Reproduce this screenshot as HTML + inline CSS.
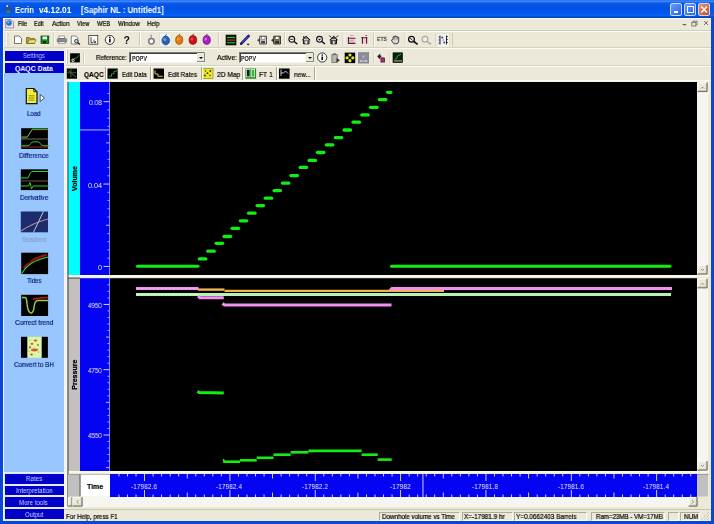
<!DOCTYPE html>
<html><head><meta charset="utf-8">
<style>
*{margin:0;padding:0;box-sizing:border-box}
html,body{width:714px;height:524px;overflow:hidden;background:#ECE9D8;font-family:"Liberation Sans", sans-serif;position:relative}
.a{position:absolute}
.t{position:absolute;white-space:nowrap;font-size:8px;line-height:10px;color:#000;will-change:transform;-webkit-text-stroke:0.2px currentColor}
.btn{position:absolute;left:5px;width:59px;background:#0000c8}
.lbl{position:absolute;width:60px;left:4px;text-align:center;font-size:7.5px;color:#1a3aa8;line-height:9px}
</style></head><body>

<div class="a" style="left:0;top:0;width:714px;height:18px;background:linear-gradient(#2a6ff0 0,#3a86ff 1.5px,#0a5ae8 3px,#0052e4 8px,#0058ee 13px,#0a62f8 16px,#0046c8 17px,#0040c0 18px)"></div>
<svg class="a" style="left:4px;top:4px" width="10" height="11"><rect x="1.5" y="1.5" width="6" height="8" fill="#2a4aa8"/><rect x="2.5" y="6.5" width="4" height="2.5" fill="#2a8a50"/><rect x="2.5" y="1" width="1.5" height="2" fill="#c0e0ff"/></svg>
<div class="a" style="left:670px;top:3.4px;width:12.2px;height:12.6px;border:1px solid #c8d8ff;border-radius:2px;background:linear-gradient(135deg,#6a9cf8,#2a62e8)"></div>
<div class="a" style="left:684px;top:3.4px;width:12.2px;height:12.6px;border:1px solid #c8d8ff;border-radius:2px;background:linear-gradient(135deg,#6a9cf8,#2a62e8)"></div>
<div class="a" style="left:698px;top:3.4px;width:12.2px;height:12.6px;border:1px solid #c8d8ff;border-radius:2px;background:linear-gradient(135deg,#f0906a,#d04a20)"></div>
<div class="a" style="left:673.5px;top:11px;width:4px;height:1.6px;background:#fff"></div>
<div class="a" style="left:686.8px;top:6px;width:7px;height:7px;border:1px solid #fff;border-top-width:1.6px"></div>
<svg class="a" style="left:698px;top:3px" width="13" height="13"><path d="M3.3 3.6 L9 9.6 M9 3.6 L3.3 9.6" stroke="#fff" stroke-width="1.5"/></svg>
<div class="a" style="left:0;top:17px;width:2.6px;height:507px;background:#0848d8"></div>
<div class="a" style="left:711px;top:17px;width:3px;height:507px;background:#0848d8"></div>
<div class="a" style="left:0;top:521px;width:714px;height:3px;background:#0848d8"></div>
<div class="a" style="left:3px;top:18px;width:708px;height:12px;background:#ECE9D8;border-top:1px solid #f8f8ff"></div>
<svg class="a" style="left:4px;top:18px" width="11" height="11"><path d="M1.5 1.5 h5.5 l2.5 2.5 v6 h-8 z" fill="#e8e0f0" stroke="#8070a0" stroke-width="0.7"/><circle cx="5" cy="5" r="2.8" fill="#1a78b8"/><circle cx="4.3" cy="4.3" r="1" fill="#80c8f0"/></svg>
<svg class="a" style="left:680px;top:18px" width="30" height="11"><rect x="2.6" y="6" width="3.6" height="1.2" fill="#666"/><rect x="13" y="3.2" width="4" height="3.5" fill="none" stroke="#777" stroke-width="0.9"/><rect x="11.8" y="4.5" width="4" height="3.5" fill="#ece9d8" stroke="#777" stroke-width="0.9"/><path d="M24 3 L28 7 M28 3 L24 7" stroke="#777" stroke-width="1"/></svg>
<div class="a" style="left:3px;top:30px;width:708px;height:1px;background:#d0cdbc"></div>
<div class="a" style="left:3px;top:31px;width:708px;height:1px;background:#fbfaf4"></div>
<div class="a" style="left:3px;top:47px;width:708px;height:1px;background:#d6d2c2"></div>
<div class="a" style="left:64px;top:48px;width:647px;height:1px;background:#fbfaf4"></div>
<div class="a" style="left:64px;top:65px;width:647px;height:1px;background:#d6d2c2"></div>
<div class="a" style="left:64px;top:66px;width:647px;height:1px;background:#fbfaf4"></div>
<div class="a" style="left:64px;top:80px;width:647px;height:1px;background:#fbfaf4"></div>
<div class="a" style="left:3px;top:48px;width:61px;height:461px;background:#ECE9D8"></div>
<div class="a" style="left:4px;top:73px;width:60px;height:399px;background:#97c7fe"></div>
<div class="a" style="left:3.5px;top:472px;width:61px;height:49px;background:#e6eaf2"></div>
<div class="a" style="left:3.5px;top:50px;width:61px;height:23px;background:#eef0f4"></div>
<div class="a" style="left:2.5px;top:18px;width:1.2px;height:503px;background:#f4f6ff"></div>
<div class="btn" style="top:51px;height:10px"></div>
<div class="btn" style="top:63px;height:10px"></div>
<div class="btn" style="top:474px;height:9.6px"></div>
<div class="btn" style="top:485.5px;height:9.6px"></div>
<div class="btn" style="top:497.3px;height:9.6px"></div>
<div class="btn" style="top:509.4px;height:9.6px"></div>
<svg class="a" style="left:0;top:0;will-change:transform" width="714" height="524" font-family="Liberation Sans, sans-serif"><defs><linearGradient id="sepg" x1="0" y1="0" x2="0" y2="1"><stop offset="0" stop-color="#fcfcf2"/><stop offset="0.5" stop-color="#f6f4e6"/><stop offset="1" stop-color="#e4e0cc"/></linearGradient></defs><rect x="64" y="81" width="647" height="428" fill="#ECE9D8"/><rect x="67.5" y="81.5" width="641" height="15" fill="#f6f4ec"/><rect x="68" y="82" width="12" height="193" fill="#00ffff"/><rect x="80" y="82" width="30" height="193" fill="#0404f2"/><rect x="110" y="82" width="587" height="193" fill="#000"/><rect x="67.5" y="275" width="641" height="3.2" fill="url(#sepg)"/><rect x="68" y="278.2" width="12" height="192.8" fill="#c4c0c0"/><rect x="80" y="278.2" width="30" height="192.8" fill="#0404f2"/><rect x="110" y="278.2" width="587" height="192.8" fill="#000"/><rect x="67.5" y="471" width="641" height="3" fill="url(#sepg)"/><rect x="64" y="81" width="3.6" height="428" fill="#f7f4ec"/><rect x="67.4" y="82" width="1.1" height="424.5" fill="#3a4a48"/><rect x="68" y="277.6" width="12" height="0.9" fill="#303030"/><rect x="67.5" y="474" width="641" height="1" fill="#808070"/><rect x="68" y="474.5" width="12" height="22" fill="#c0c0c0"/><rect x="80" y="474.5" width="30" height="22" fill="#fff"/><rect x="79.6" y="474.5" width="0.9" height="22" fill="#404040"/><rect x="110" y="474" width="587" height="23" fill="#0404f2"/><rect x="697" y="474.5" width="11" height="22" fill="#c0c0c0"/><rect x="697" y="82" width="11" height="193" fill="#f6f5f0"/><rect x="697.5" y="82.5" width="10" height="9.5" fill="#ECE9D8"/><path d="M697.9 92.0 V82.9 H707.5" stroke="#fff" stroke-width="0.8" fill="none"/><path d="M697.5 91.6 H707.1 V82.5" stroke="#404040" stroke-width="0.8" fill="none"/><path d="M698.3 90.9 H706.4 V83.3" stroke="#9a9888" stroke-width="0.7" fill="none"/><rect x="697.5" y="265" width="10" height="9.5" fill="#ECE9D8"/><path d="M697.9 274.5 V265.4 H707.5" stroke="#fff" stroke-width="0.8" fill="none"/><path d="M697.5 274.1 H707.1 V265" stroke="#404040" stroke-width="0.8" fill="none"/><path d="M698.3 273.4 H706.4 V265.8" stroke="#9a9888" stroke-width="0.7" fill="none"/><path d="M701 88.5 l1.5 -1.5 l1.5 1.5" stroke="#777" fill="none" stroke-width="0.8"/><path d="M701 269 l1.5 1.5 l1.5 -1.5" stroke="#777" fill="none" stroke-width="0.8"/><rect x="697" y="278.2" width="11" height="192.8" fill="#f6f5f0"/><rect x="697.5" y="278.7" width="10" height="9.5" fill="#ECE9D8"/><path d="M697.9 288.2 V279.09999999999997 H707.5" stroke="#fff" stroke-width="0.8" fill="none"/><path d="M697.5 287.8 H707.1 V278.7" stroke="#404040" stroke-width="0.8" fill="none"/><path d="M698.3 287.09999999999997 H706.4 V279.5" stroke="#9a9888" stroke-width="0.7" fill="none"/><rect x="697.5" y="461" width="10" height="9.5" fill="#ECE9D8"/><path d="M697.9 470.5 V461.4 H707.5" stroke="#fff" stroke-width="0.8" fill="none"/><path d="M697.5 470.1 H707.1 V461" stroke="#404040" stroke-width="0.8" fill="none"/><path d="M698.3 469.4 H706.4 V461.8" stroke="#9a9888" stroke-width="0.7" fill="none"/><path d="M701 284.7 l1.5 -1.5 l1.5 1.5" stroke="#777" fill="none" stroke-width="0.8"/><path d="M701 465 l1.5 1.5 l1.5 -1.5" stroke="#777" fill="none" stroke-width="0.8"/><rect x="68" y="497" width="629" height="10" fill="#f6f5f0"/><rect x="68" y="497" width="4.5" height="9.5" fill="#ECE9D8"/><path d="M68.4 506.5 V497.4 H72.5" stroke="#fff" stroke-width="0.8" fill="none"/><path d="M68 506.1 H72.1 V497" stroke="#404040" stroke-width="0.8" fill="none"/><path d="M68.8 505.4 H71.4 V497.8" stroke="#9a9888" stroke-width="0.7" fill="none"/><rect x="72.5" y="497" width="10" height="9.5" fill="#ECE9D8"/><path d="M72.9 506.5 V497.4 H82.5" stroke="#fff" stroke-width="0.8" fill="none"/><path d="M72.5 506.1 H82.1 V497" stroke="#404040" stroke-width="0.8" fill="none"/><path d="M73.3 505.4 H81.4 V497.8" stroke="#9a9888" stroke-width="0.7" fill="none"/><rect x="688.5" y="497" width="9" height="9.5" fill="#ECE9D8"/><path d="M688.9 506.5 V497.4 H697.5" stroke="#fff" stroke-width="0.8" fill="none"/><path d="M688.5 506.1 H697.1 V497" stroke="#404040" stroke-width="0.8" fill="none"/><path d="M689.3 505.4 H696.4 V497.8" stroke="#9a9888" stroke-width="0.7" fill="none"/><path d="M78.5 500 l-1.5 1.8 l1.5 1.8" stroke="#777" fill="none" stroke-width="0.8"/><path d="M692 500 l1.5 1.8 l-1.5 1.8" stroke="#777" fill="none" stroke-width="0.8"/><rect x="103.5" y="265.95" width="6.5" height="0.9" fill="#e8e8ff"/><rect x="107.5" y="257.71" width="2.5" height="0.9" fill="#b0b0ff"/><rect x="107.5" y="249.48" width="2.5" height="0.9" fill="#b0b0ff"/><rect x="107.5" y="241.25" width="2.5" height="0.9" fill="#b0b0ff"/><rect x="107.5" y="233.01" width="2.5" height="0.9" fill="#b0b0ff"/><rect x="106" y="224.77" width="4" height="0.9" fill="#c8c8ff"/><rect x="107.5" y="216.54" width="2.5" height="0.9" fill="#b0b0ff"/><rect x="107.5" y="208.31" width="2.5" height="0.9" fill="#b0b0ff"/><rect x="107.5" y="200.07" width="2.5" height="0.9" fill="#b0b0ff"/><rect x="107.5" y="191.83" width="2.5" height="0.9" fill="#b0b0ff"/><rect x="103.5" y="183.60" width="6.5" height="0.9" fill="#e8e8ff"/><rect x="107.5" y="175.37" width="2.5" height="0.9" fill="#b0b0ff"/><rect x="107.5" y="167.13" width="2.5" height="0.9" fill="#b0b0ff"/><rect x="107.5" y="158.89" width="2.5" height="0.9" fill="#b0b0ff"/><rect x="107.5" y="150.66" width="2.5" height="0.9" fill="#b0b0ff"/><rect x="106" y="142.43" width="4" height="0.9" fill="#c8c8ff"/><rect x="107.5" y="134.19" width="2.5" height="0.9" fill="#b0b0ff"/><rect x="107.5" y="125.95" width="2.5" height="0.9" fill="#b0b0ff"/><rect x="107.5" y="117.72" width="2.5" height="0.9" fill="#b0b0ff"/><rect x="107.5" y="109.48" width="2.5" height="0.9" fill="#b0b0ff"/><rect x="103.5" y="101.25" width="6.5" height="0.9" fill="#e8e8ff"/><rect x="107.5" y="93.01" width="2.5" height="0.9" fill="#b0b0ff"/><rect x="109" y="82" width="0.9" height="193" fill="#8a8aff"/><rect x="80" y="129.5" width="29" height="0.9" fill="#c8c8ff"/><rect x="107.5" y="284.36" width="2.5" height="0.9" fill="#b0b0ff"/><rect x="107.5" y="290.89" width="2.5" height="0.9" fill="#b0b0ff"/><rect x="107.5" y="297.42" width="2.5" height="0.9" fill="#b0b0ff"/><rect x="103.5" y="303.95" width="6.5" height="0.9" fill="#e8e8ff"/><rect x="107.5" y="310.48" width="2.5" height="0.9" fill="#b0b0ff"/><rect x="107.5" y="317.01" width="2.5" height="0.9" fill="#b0b0ff"/><rect x="107.5" y="323.54" width="2.5" height="0.9" fill="#b0b0ff"/><rect x="107.5" y="330.07" width="2.5" height="0.9" fill="#b0b0ff"/><rect x="106" y="336.60" width="4" height="0.9" fill="#c8c8ff"/><rect x="107.5" y="343.13" width="2.5" height="0.9" fill="#b0b0ff"/><rect x="107.5" y="349.66" width="2.5" height="0.9" fill="#b0b0ff"/><rect x="107.5" y="356.19" width="2.5" height="0.9" fill="#b0b0ff"/><rect x="107.5" y="362.72" width="2.5" height="0.9" fill="#b0b0ff"/><rect x="103.5" y="369.25" width="6.5" height="0.9" fill="#e8e8ff"/><rect x="107.5" y="375.78" width="2.5" height="0.9" fill="#b0b0ff"/><rect x="107.5" y="382.31" width="2.5" height="0.9" fill="#b0b0ff"/><rect x="107.5" y="388.84" width="2.5" height="0.9" fill="#b0b0ff"/><rect x="107.5" y="395.37" width="2.5" height="0.9" fill="#b0b0ff"/><rect x="106" y="401.90" width="4" height="0.9" fill="#c8c8ff"/><rect x="107.5" y="408.43" width="2.5" height="0.9" fill="#b0b0ff"/><rect x="107.5" y="414.96" width="2.5" height="0.9" fill="#b0b0ff"/><rect x="107.5" y="421.49" width="2.5" height="0.9" fill="#b0b0ff"/><rect x="107.5" y="428.02" width="2.5" height="0.9" fill="#b0b0ff"/><rect x="103.5" y="434.55" width="6.5" height="0.9" fill="#e8e8ff"/><rect x="107.5" y="441.08" width="2.5" height="0.9" fill="#b0b0ff"/><rect x="107.5" y="447.61" width="2.5" height="0.9" fill="#b0b0ff"/><rect x="107.5" y="454.14" width="2.5" height="0.9" fill="#b0b0ff"/><rect x="107.5" y="460.67" width="2.5" height="0.9" fill="#b0b0ff"/><rect x="106" y="467.20" width="4" height="0.9" fill="#c8c8ff"/><rect x="109" y="278.2" width="0.9" height="192.8" fill="#8a8aff"/><text x="77.3" y="178.5" font-size="7" fill="#000" text-anchor="middle" font-weight="bold" stroke="#000" stroke-width="0.25" transform="rotate(-90 77.3 178.5)">Volume</text><text x="77.3" y="374.7" font-size="7" fill="#000" text-anchor="middle" font-weight="bold" stroke="#000" stroke-width="0.25" transform="rotate(-90 77.3 374.7)">Pressure</text><rect x="118.50" y="474" width="0.9" height="2.5" fill="#e0e0ff"/><rect x="118.50" y="494.5" width="0.9" height="2.5" fill="#e0e0ff"/><rect x="127.03" y="474" width="0.9" height="2.5" fill="#e0e0ff"/><rect x="127.03" y="494.5" width="0.9" height="2.5" fill="#e0e0ff"/><rect x="135.56" y="474" width="0.9" height="2.5" fill="#e0e0ff"/><rect x="135.56" y="494.5" width="0.9" height="2.5" fill="#e0e0ff"/><rect x="144.10" y="474" width="0.9" height="7" fill="#e0e0ff"/><rect x="144.10" y="490" width="0.9" height="7" fill="#e0e0ff"/><rect x="152.63" y="474" width="0.9" height="2.5" fill="#e0e0ff"/><rect x="152.63" y="494.5" width="0.9" height="2.5" fill="#e0e0ff"/><rect x="161.17" y="474" width="0.9" height="2.5" fill="#e0e0ff"/><rect x="161.17" y="494.5" width="0.9" height="2.5" fill="#e0e0ff"/><rect x="169.70" y="474" width="0.9" height="2.5" fill="#e0e0ff"/><rect x="169.70" y="494.5" width="0.9" height="2.5" fill="#e0e0ff"/><rect x="178.24" y="474" width="0.9" height="2.5" fill="#e0e0ff"/><rect x="178.24" y="494.5" width="0.9" height="2.5" fill="#e0e0ff"/><rect x="186.78" y="474" width="0.9" height="4.5" fill="#e0e0ff"/><rect x="186.78" y="492.5" width="0.9" height="4.5" fill="#e0e0ff"/><rect x="195.31" y="474" width="0.9" height="2.5" fill="#e0e0ff"/><rect x="195.31" y="494.5" width="0.9" height="2.5" fill="#e0e0ff"/><rect x="203.84" y="474" width="0.9" height="2.5" fill="#e0e0ff"/><rect x="203.84" y="494.5" width="0.9" height="2.5" fill="#e0e0ff"/><rect x="212.38" y="474" width="0.9" height="2.5" fill="#e0e0ff"/><rect x="212.38" y="494.5" width="0.9" height="2.5" fill="#e0e0ff"/><rect x="220.91" y="474" width="0.9" height="2.5" fill="#e0e0ff"/><rect x="220.91" y="494.5" width="0.9" height="2.5" fill="#e0e0ff"/><rect x="229.45" y="474" width="0.9" height="7" fill="#e0e0ff"/><rect x="229.45" y="490" width="0.9" height="7" fill="#e0e0ff"/><rect x="237.98" y="474" width="0.9" height="2.5" fill="#e0e0ff"/><rect x="237.98" y="494.5" width="0.9" height="2.5" fill="#e0e0ff"/><rect x="246.52" y="474" width="0.9" height="2.5" fill="#e0e0ff"/><rect x="246.52" y="494.5" width="0.9" height="2.5" fill="#e0e0ff"/><rect x="255.05" y="474" width="0.9" height="2.5" fill="#e0e0ff"/><rect x="255.05" y="494.5" width="0.9" height="2.5" fill="#e0e0ff"/><rect x="263.59" y="474" width="0.9" height="2.5" fill="#e0e0ff"/><rect x="263.59" y="494.5" width="0.9" height="2.5" fill="#e0e0ff"/><rect x="272.12" y="474" width="0.9" height="4.5" fill="#e0e0ff"/><rect x="272.12" y="492.5" width="0.9" height="4.5" fill="#e0e0ff"/><rect x="280.66" y="474" width="0.9" height="2.5" fill="#e0e0ff"/><rect x="280.66" y="494.5" width="0.9" height="2.5" fill="#e0e0ff"/><rect x="289.19" y="474" width="0.9" height="2.5" fill="#e0e0ff"/><rect x="289.19" y="494.5" width="0.9" height="2.5" fill="#e0e0ff"/><rect x="297.73" y="474" width="0.9" height="2.5" fill="#e0e0ff"/><rect x="297.73" y="494.5" width="0.9" height="2.5" fill="#e0e0ff"/><rect x="306.26" y="474" width="0.9" height="2.5" fill="#e0e0ff"/><rect x="306.26" y="494.5" width="0.9" height="2.5" fill="#e0e0ff"/><rect x="314.80" y="474" width="0.9" height="7" fill="#e0e0ff"/><rect x="314.80" y="490" width="0.9" height="7" fill="#e0e0ff"/><rect x="323.34" y="474" width="0.9" height="2.5" fill="#e0e0ff"/><rect x="323.34" y="494.5" width="0.9" height="2.5" fill="#e0e0ff"/><rect x="331.87" y="474" width="0.9" height="2.5" fill="#e0e0ff"/><rect x="331.87" y="494.5" width="0.9" height="2.5" fill="#e0e0ff"/><rect x="340.41" y="474" width="0.9" height="2.5" fill="#e0e0ff"/><rect x="340.41" y="494.5" width="0.9" height="2.5" fill="#e0e0ff"/><rect x="348.94" y="474" width="0.9" height="2.5" fill="#e0e0ff"/><rect x="348.94" y="494.5" width="0.9" height="2.5" fill="#e0e0ff"/><rect x="357.48" y="474" width="0.9" height="4.5" fill="#e0e0ff"/><rect x="357.48" y="492.5" width="0.9" height="4.5" fill="#e0e0ff"/><rect x="366.01" y="474" width="0.9" height="2.5" fill="#e0e0ff"/><rect x="366.01" y="494.5" width="0.9" height="2.5" fill="#e0e0ff"/><rect x="374.55" y="474" width="0.9" height="2.5" fill="#e0e0ff"/><rect x="374.55" y="494.5" width="0.9" height="2.5" fill="#e0e0ff"/><rect x="383.08" y="474" width="0.9" height="2.5" fill="#e0e0ff"/><rect x="383.08" y="494.5" width="0.9" height="2.5" fill="#e0e0ff"/><rect x="391.62" y="474" width="0.9" height="2.5" fill="#e0e0ff"/><rect x="391.62" y="494.5" width="0.9" height="2.5" fill="#e0e0ff"/><rect x="400.15" y="474" width="0.9" height="7" fill="#e0e0ff"/><rect x="400.15" y="490" width="0.9" height="7" fill="#e0e0ff"/><rect x="408.69" y="474" width="0.9" height="2.5" fill="#e0e0ff"/><rect x="408.69" y="494.5" width="0.9" height="2.5" fill="#e0e0ff"/><rect x="417.22" y="474" width="0.9" height="2.5" fill="#e0e0ff"/><rect x="417.22" y="494.5" width="0.9" height="2.5" fill="#e0e0ff"/><rect x="425.75" y="474" width="0.9" height="2.5" fill="#e0e0ff"/><rect x="425.75" y="494.5" width="0.9" height="2.5" fill="#e0e0ff"/><rect x="434.29" y="474" width="0.9" height="2.5" fill="#e0e0ff"/><rect x="434.29" y="494.5" width="0.9" height="2.5" fill="#e0e0ff"/><rect x="442.83" y="474" width="0.9" height="4.5" fill="#e0e0ff"/><rect x="442.83" y="492.5" width="0.9" height="4.5" fill="#e0e0ff"/><rect x="451.36" y="474" width="0.9" height="2.5" fill="#e0e0ff"/><rect x="451.36" y="494.5" width="0.9" height="2.5" fill="#e0e0ff"/><rect x="459.89" y="474" width="0.9" height="2.5" fill="#e0e0ff"/><rect x="459.89" y="494.5" width="0.9" height="2.5" fill="#e0e0ff"/><rect x="468.43" y="474" width="0.9" height="2.5" fill="#e0e0ff"/><rect x="468.43" y="494.5" width="0.9" height="2.5" fill="#e0e0ff"/><rect x="476.96" y="474" width="0.9" height="2.5" fill="#e0e0ff"/><rect x="476.96" y="494.5" width="0.9" height="2.5" fill="#e0e0ff"/><rect x="485.50" y="474" width="0.9" height="7" fill="#e0e0ff"/><rect x="485.50" y="490" width="0.9" height="7" fill="#e0e0ff"/><rect x="494.04" y="474" width="0.9" height="2.5" fill="#e0e0ff"/><rect x="494.04" y="494.5" width="0.9" height="2.5" fill="#e0e0ff"/><rect x="502.57" y="474" width="0.9" height="2.5" fill="#e0e0ff"/><rect x="502.57" y="494.5" width="0.9" height="2.5" fill="#e0e0ff"/><rect x="511.11" y="474" width="0.9" height="2.5" fill="#e0e0ff"/><rect x="511.11" y="494.5" width="0.9" height="2.5" fill="#e0e0ff"/><rect x="519.64" y="474" width="0.9" height="2.5" fill="#e0e0ff"/><rect x="519.64" y="494.5" width="0.9" height="2.5" fill="#e0e0ff"/><rect x="528.17" y="474" width="0.9" height="4.5" fill="#e0e0ff"/><rect x="528.17" y="492.5" width="0.9" height="4.5" fill="#e0e0ff"/><rect x="536.71" y="474" width="0.9" height="2.5" fill="#e0e0ff"/><rect x="536.71" y="494.5" width="0.9" height="2.5" fill="#e0e0ff"/><rect x="545.25" y="474" width="0.9" height="2.5" fill="#e0e0ff"/><rect x="545.25" y="494.5" width="0.9" height="2.5" fill="#e0e0ff"/><rect x="553.78" y="474" width="0.9" height="2.5" fill="#e0e0ff"/><rect x="553.78" y="494.5" width="0.9" height="2.5" fill="#e0e0ff"/><rect x="562.31" y="474" width="0.9" height="2.5" fill="#e0e0ff"/><rect x="562.31" y="494.5" width="0.9" height="2.5" fill="#e0e0ff"/><rect x="570.85" y="474" width="0.9" height="7" fill="#e0e0ff"/><rect x="570.85" y="490" width="0.9" height="7" fill="#e0e0ff"/><rect x="579.38" y="474" width="0.9" height="2.5" fill="#e0e0ff"/><rect x="579.38" y="494.5" width="0.9" height="2.5" fill="#e0e0ff"/><rect x="587.92" y="474" width="0.9" height="2.5" fill="#e0e0ff"/><rect x="587.92" y="494.5" width="0.9" height="2.5" fill="#e0e0ff"/><rect x="596.45" y="474" width="0.9" height="2.5" fill="#e0e0ff"/><rect x="596.45" y="494.5" width="0.9" height="2.5" fill="#e0e0ff"/><rect x="604.99" y="474" width="0.9" height="2.5" fill="#e0e0ff"/><rect x="604.99" y="494.5" width="0.9" height="2.5" fill="#e0e0ff"/><rect x="613.52" y="474" width="0.9" height="4.5" fill="#e0e0ff"/><rect x="613.52" y="492.5" width="0.9" height="4.5" fill="#e0e0ff"/><rect x="622.06" y="474" width="0.9" height="2.5" fill="#e0e0ff"/><rect x="622.06" y="494.5" width="0.9" height="2.5" fill="#e0e0ff"/><rect x="630.60" y="474" width="0.9" height="2.5" fill="#e0e0ff"/><rect x="630.60" y="494.5" width="0.9" height="2.5" fill="#e0e0ff"/><rect x="639.13" y="474" width="0.9" height="2.5" fill="#e0e0ff"/><rect x="639.13" y="494.5" width="0.9" height="2.5" fill="#e0e0ff"/><rect x="647.66" y="474" width="0.9" height="2.5" fill="#e0e0ff"/><rect x="647.66" y="494.5" width="0.9" height="2.5" fill="#e0e0ff"/><rect x="656.20" y="474" width="0.9" height="7" fill="#e0e0ff"/><rect x="656.20" y="490" width="0.9" height="7" fill="#e0e0ff"/><rect x="664.74" y="474" width="0.9" height="2.5" fill="#e0e0ff"/><rect x="664.74" y="494.5" width="0.9" height="2.5" fill="#e0e0ff"/><rect x="673.27" y="474" width="0.9" height="2.5" fill="#e0e0ff"/><rect x="673.27" y="494.5" width="0.9" height="2.5" fill="#e0e0ff"/><rect x="681.80" y="474" width="0.9" height="2.5" fill="#e0e0ff"/><rect x="681.80" y="494.5" width="0.9" height="2.5" fill="#e0e0ff"/><rect x="690.34" y="474" width="0.9" height="2.5" fill="#e0e0ff"/><rect x="690.34" y="494.5" width="0.9" height="2.5" fill="#e0e0ff"/><rect x="422.5" y="474" width="0.9" height="23" fill="#e0e0ff"/><line x1="137.5" y1="266.2" x2="198" y2="266.2" stroke="#10f010" stroke-width="3" stroke-linecap="round"/><line x1="391.5" y1="266.2" x2="670" y2="266.2" stroke="#10f010" stroke-width="3" stroke-linecap="round"/><line x1="199.40" y1="258.90" x2="205.80" y2="258.90" stroke="#10f010" stroke-width="3.3" stroke-linecap="round"/><line x1="207.80" y1="251.20" x2="214.20" y2="251.20" stroke="#10f010" stroke-width="3.3" stroke-linecap="round"/><line x1="216.20" y1="243.30" x2="222.60" y2="243.30" stroke="#10f010" stroke-width="3.3" stroke-linecap="round"/><line x1="224.10" y1="236.50" x2="230.50" y2="236.50" stroke="#10f010" stroke-width="3.3" stroke-linecap="round"/><line x1="232.10" y1="228.40" x2="238.50" y2="228.40" stroke="#10f010" stroke-width="3.3" stroke-linecap="round"/><line x1="240.30" y1="220.80" x2="246.70" y2="220.80" stroke="#10f010" stroke-width="3.3" stroke-linecap="round"/><line x1="248.60" y1="213.20" x2="255.00" y2="213.20" stroke="#10f010" stroke-width="3.3" stroke-linecap="round"/><line x1="257.10" y1="205.60" x2="263.50" y2="205.60" stroke="#10f010" stroke-width="3.3" stroke-linecap="round"/><line x1="265.30" y1="198.20" x2="271.70" y2="198.20" stroke="#10f010" stroke-width="3.3" stroke-linecap="round"/><line x1="274.10" y1="190.60" x2="280.50" y2="190.60" stroke="#10f010" stroke-width="3.3" stroke-linecap="round"/><line x1="282.40" y1="183.10" x2="288.80" y2="183.10" stroke="#10f010" stroke-width="3.3" stroke-linecap="round"/><line x1="291.00" y1="175.60" x2="297.40" y2="175.60" stroke="#10f010" stroke-width="3.3" stroke-linecap="round"/><line x1="300.20" y1="167.40" x2="306.60" y2="167.40" stroke="#10f010" stroke-width="3.3" stroke-linecap="round"/><line x1="309.10" y1="160.40" x2="315.50" y2="160.40" stroke="#10f010" stroke-width="3.3" stroke-linecap="round"/><line x1="317.50" y1="152.50" x2="323.90" y2="152.50" stroke="#10f010" stroke-width="3.3" stroke-linecap="round"/><line x1="326.40" y1="144.90" x2="332.80" y2="144.90" stroke="#10f010" stroke-width="3.3" stroke-linecap="round"/><line x1="335.30" y1="137.60" x2="341.70" y2="137.60" stroke="#10f010" stroke-width="3.3" stroke-linecap="round"/><line x1="344.10" y1="130.00" x2="350.50" y2="130.00" stroke="#10f010" stroke-width="3.3" stroke-linecap="round"/><line x1="353.10" y1="122.20" x2="359.50" y2="122.20" stroke="#10f010" stroke-width="3.3" stroke-linecap="round"/><line x1="361.80" y1="114.90" x2="368.20" y2="114.90" stroke="#10f010" stroke-width="3.3" stroke-linecap="round"/><line x1="370.60" y1="107.30" x2="377.00" y2="107.30" stroke="#10f010" stroke-width="3.3" stroke-linecap="round"/><line x1="379.40" y1="99.60" x2="385.80" y2="99.60" stroke="#10f010" stroke-width="3.3" stroke-linecap="round"/><line x1="387.60" y1="92.30" x2="390.80" y2="92.30" stroke="#10f010" stroke-width="3.3" stroke-linecap="round"/><line x1="198" y1="289.6" x2="224.5" y2="289.6" stroke="#f0b448" stroke-width="2.4" stroke-linecap="butt"/><line x1="224.5" y1="290.9" x2="444" y2="290.9" stroke="#f0b448" stroke-width="2.4" stroke-linecap="butt"/><line x1="136" y1="288.4" x2="198.5" y2="288.4" stroke="#f090f0" stroke-width="3" stroke-linecap="butt"/><polyline points="390,290.5 392,288.5 672,288.5" stroke="#f090f0" stroke-width="3" fill="none"/><line x1="136" y1="294.6" x2="671" y2="294.6" stroke="#b8f4b0" stroke-width="3" stroke-linecap="butt"/><line x1="137" y1="288.4" x2="198" y2="288.4" stroke="#fff0ff" stroke-width="1" stroke-dasharray="1.5 2.5" opacity="0.45"/><line x1="137" y1="294.4" x2="198" y2="294.4" stroke="#ffffff" stroke-width="1" stroke-dasharray="1.5 2" opacity="0.6"/><polyline points="198,296 200,297.7 223.8,297.7" stroke="#f090f0" stroke-width="3" fill="none"/><polyline points="222.5,303.5 224.5,305 391.5,305" stroke="#f090f0" stroke-width="3" fill="none"/><polyline points="197.6,391.2 199,392.5 223.8,393" stroke="#10f010" stroke-width="3" fill="none"/><line x1="223.1" y1="461.7" x2="240" y2="461.7" stroke="#10f010" stroke-width="2.6" stroke-linecap="butt"/><line x1="240" y1="460.3" x2="256.7" y2="460.3" stroke="#10f010" stroke-width="2.6" stroke-linecap="butt"/><line x1="256.7" y1="457.8" x2="273.5" y2="457.8" stroke="#10f010" stroke-width="2.6" stroke-linecap="butt"/><line x1="273.5" y1="454.7" x2="290.6" y2="454.7" stroke="#10f010" stroke-width="2.6" stroke-linecap="butt"/><line x1="290.6" y1="452.3" x2="308.4" y2="452.3" stroke="#10f010" stroke-width="2.6" stroke-linecap="butt"/><line x1="308.4" y1="450.9" x2="361.6" y2="450.9" stroke="#10f010" stroke-width="2.6" stroke-linecap="butt"/><line x1="361.6" y1="454.7" x2="377.7" y2="454.7" stroke="#10f010" stroke-width="2.6" stroke-linecap="butt"/><line x1="377.7" y1="459.6" x2="391.7" y2="459.6" stroke="#10f010" stroke-width="2.6" stroke-linecap="butt"/><polyline points="223.1,459.3 224.5,461.2" stroke="#10f010" stroke-width="1.6" fill="none"/><rect x="6.5" y="33" width="1" height="13" fill="#fff"/><rect x="7.5" y="33" width="0.8" height="13" fill="#c8c4b0"/><rect x="66" y="50" width="1" height="14" fill="#fff"/><rect x="67" y="50" width="0.8" height="14" fill="#c8c4b0"/><path d="M14.5 36 h4.5 l2.5 2.5 v5 h-7 z" fill="#fff" stroke="#555" stroke-width="0.8"/><path d="M26.5 37.5 h3 l1 1 h4 v5 h-8 z" fill="#b0a040" stroke="#665a10" stroke-width="0.7"/><path d="M27.5 43.3 l1.8 -3.5 h7 l-1.8 3.5 z" fill="#f0e070" stroke="#665a10" stroke-width="0.6"/><rect x="41" y="36" width="7.8" height="7.5" fill="#108a20" stroke="#063010" stroke-width="0.7"/><rect x="42.5" y="36.5" width="4.5" height="2.8" fill="#e8f4e8"/><rect x="43" y="41" width="3" height="2" fill="#063010"/><rect x="53.5" y="33" width="0.8" height="13" fill="#c5c1ae"/><rect x="54.3" y="33" width="0.8" height="13" fill="#fff"/><rect x="139.2" y="33" width="0.8" height="13" fill="#c5c1ae"/><rect x="140.0" y="33" width="0.8" height="13" fill="#fff"/><rect x="218.3" y="33" width="0.8" height="13" fill="#c5c1ae"/><rect x="219.10000000000002" y="33" width="0.8" height="13" fill="#fff"/><rect x="284.3" y="33" width="0.8" height="13" fill="#c5c1ae"/><rect x="285.1" y="33" width="0.8" height="13" fill="#fff"/><rect x="342.7" y="33" width="0.8" height="13" fill="#c5c1ae"/><rect x="343.5" y="33" width="0.8" height="13" fill="#fff"/><rect x="373.2" y="33" width="0.8" height="13" fill="#c5c1ae"/><rect x="374.0" y="33" width="0.8" height="13" fill="#fff"/><rect x="404.7" y="33" width="0.8" height="13" fill="#c5c1ae"/><rect x="405.5" y="33" width="0.8" height="13" fill="#fff"/><rect x="435" y="33" width="0.8" height="13" fill="#c5c1ae"/><rect x="435.8" y="33" width="0.8" height="13" fill="#fff"/><rect x="59" y="36" width="5.5" height="2.5" fill="#fff" stroke="#666" stroke-width="0.6"/><rect x="57.3" y="38.5" width="9.3" height="3.8" rx="1" fill="#8a8a8a" stroke="#555" stroke-width="0.6"/><rect x="59" y="41.8" width="6" height="2" fill="#eee" stroke="#666" stroke-width="0.5"/><path d="M71.3 36 h4.5 l2 2 v6 h-6.5 z" fill="#fff" stroke="#555" stroke-width="0.7"/><circle cx="76.3" cy="41.2" r="1.8" fill="#bcd" stroke="#222" stroke-width="0.8"/><line x1="77.5" y1="42.5" x2="80" y2="44.5" stroke="#111" stroke-width="1.1"/><rect x="88.8" y="35.6" width="9" height="8.6" fill="#fff" stroke="#333" stroke-width="0.8"/><path d="M91 37.2 v5.5 h2 M94 39.5 v3.2 h1.5 M95.5 41 v1.7" stroke="#111" fill="none" stroke-width="0.8"/><circle cx="109.8" cy="39.9" r="4.5" fill="#fff" stroke="#222" stroke-width="0.9"/><rect x="109" y="38.8" width="1.7" height="3.6" fill="#111"/><circle cx="109.85" cy="37.4" r="0.85" fill="#111"/><text x="126.8" y="44.2" font-size="10.5" font-weight="bold" text-anchor="middle" fill="#111">?</text><circle cx="151.4" cy="41.2" r="2.7" fill="#fff" stroke="#777" stroke-width="1.5"/><path d="M151.2 34.8 v3.2" stroke="#888" stroke-width="1"/><path d="M150 36 l1.5 -1 " stroke="#aaa" stroke-width="0.8"/><rect x="159.6" y="33" width="11.8" height="13.5" fill="#eef4f2" stroke="#d8e0d8" stroke-width="0.6"/><ellipse cx="165.8" cy="40.5" rx="3.9" ry="4.4" fill="#2a62b0" stroke="#183a78" stroke-width="0.6"/><path d="M165.3 35.9 l1.2 -1.5" stroke="#183a78" stroke-width="0.9"/><ellipse cx="164.8" cy="39.5" rx="1.56" ry="1.54" fill="#8ab8f0" opacity="0.7"/><ellipse cx="179.2" cy="40" rx="3.6" ry="4.4" fill="#e07a10" stroke="#8a4000" stroke-width="0.6"/><path d="M178.7 35.4 l1.2 -1.5" stroke="#8a4000" stroke-width="0.9"/><ellipse cx="178.2" cy="39" rx="1.4400000000000002" ry="1.54" fill="#f8b050" opacity="0.7"/><ellipse cx="192.9" cy="40" rx="3.8" ry="4.4" fill="#d01010" stroke="#700008" stroke-width="0.6"/><path d="M192.4 35.4 l1.2 -1.5" stroke="#700008" stroke-width="0.9"/><ellipse cx="191.9" cy="39" rx="1.52" ry="1.54" fill="#f06060" opacity="0.7"/><ellipse cx="206.7" cy="40" rx="3.7" ry="4.4" fill="#a820c0" stroke="#600070" stroke-width="0.6"/><path d="M206.2 35.4 l1.2 -1.5" stroke="#600070" stroke-width="0.9"/><ellipse cx="205.7" cy="39" rx="1.4800000000000002" ry="1.54" fill="#e080f0" opacity="0.7"/><rect x="226" y="35" width="10" height="10" fill="#0a200a" stroke="#000" stroke-width="0.6"/><rect x="227" y="37" width="8" height="1" fill="#30c030"/><rect x="227" y="39.6" width="8" height="1" fill="#d03030"/><rect x="227" y="42.2" width="8" height="1" fill="#30c030"/><line x1="241.2" y1="43.6" x2="248.6" y2="36" stroke="#1a1a80" stroke-width="2.6" stroke-linecap="round"/><line x1="242" y1="42.6" x2="248" y2="36.6" stroke="#6a6ae0" stroke-width="0.8"/><path d="M240 45 l1.2 -2 l1 1z" fill="#111"/><path d="M246.5 43.8 h3.2 l-1.6 1.6z" fill="#111"/><path d="M259.7 36.2 h6.8 v7.8 h-6.8 z" fill="#d8d8d0" stroke="#404040" stroke-width="0.9"/><rect x="261.2" y="36.6" width="3.8" height="2.6" fill="#fff" stroke="#404040" stroke-width="0.5"/><rect x="261.2" y="40.8" width="3.8" height="2.6" fill="#404040"/><path d="M257.09999999999997 40.2 l2.6 -2.3 v4.6 z" fill="#404040"/><path d="M273.7 36.2 h6.8 v7.8 h-6.8 z" fill="#8a8a70" stroke="#303020" stroke-width="0.9"/><rect x="275.2" y="36.6" width="3.8" height="2.6" fill="#fff" stroke="#303020" stroke-width="0.5"/><rect x="275.2" y="40.8" width="3.8" height="2.6" fill="#303020"/><path d="M271.09999999999997 40.2 l2.6 -2.3 v4.6 z" fill="#303020"/><circle cx="291.8" cy="39.3" r="2.9" fill="#f4f4ee" stroke="#111" stroke-width="1.1"/><line x1="290.2" y1="39.3" x2="293.4" y2="39.3" stroke="#111" stroke-width="0.9"/><line x1="294" y1="41.5" x2="297.3" y2="44" stroke="#111" stroke-width="1.5"/><path d="M302.3 40 l3.9 -3.8 l3.9 3.8 M303.4 39.2 v4.6 h5.6 v-4.6" fill="#808078" stroke="#111" stroke-width="1"/><rect x="305.3" y="41.2" width="1.8" height="2.6" fill="#eee"/><rect x="303.2" y="36.2" width="1.2" height="2" fill="#111"/><circle cx="319.5" cy="39.3" r="2.9" fill="#f4f4ee" stroke="#111" stroke-width="1.1"/><path d="M318 38.7 h3 l-1.5 2z" fill="#111"/><line x1="321.8" y1="41.5" x2="325" y2="44" stroke="#111" stroke-width="1.5"/><path d="M329.8 40 l3.9 -3.8 l3.9 3.8 M330.9 39.2 v4.6 h5.6 v-4.6" fill="#505048" stroke="#111" stroke-width="1"/><rect x="332.8" y="41.2" width="1.8" height="2.6" fill="#eee"/><path d="M329.3 35.5 l2 2 M338 35.5 l-2 2" stroke="#111" stroke-width="1"/><rect x="349" y="38" width="6.5" height="5.2" fill="#f0c8d8"/><path d="M348.4 37 v6.8 M348.4 38.3 h7 M348.4 43.4 h7" stroke="#5a1a2a" stroke-width="1.1" fill="none"/><path d="M350 35.5 h3.5 M349.5 40.8 h4" stroke="#c080a0" stroke-width="0.8" fill="none"/><rect x="362.4" y="38" width="4" height="5.5" fill="#f0c8d8"/><path d="M362.4 37 v6.8 M366.6 37 v6.8 M361.2 37.7 h6.2" stroke="#5a1a2a" stroke-width="1.1" fill="none"/><path d="M365.5 35.5 h1.5" stroke="#803050" stroke-width="0.9"/><text x="382" y="41.3" font-size="4.6" font-weight="bold" text-anchor="middle" fill="#404040" textLength="10" lengthAdjust="spacingAndGlyphs">ETS</text><rect x="377" y="36.8" width="10" height="0.7" fill="#888"/><path d="M391.3 40.2 l1.8 -0.8 v-2.6 h1.4 v-0.8 h1.4 v0.6 h1.4 v0.8 h1.4 v3.8 q0 2.6 -2.6 2.6 h-2.2 z" fill="#d8d8d0" stroke="#333" stroke-width="0.9"/><path d="M394.5 37 v2.5 M396 36.5 v3 M397.4 37 v2.5" stroke="#555" stroke-width="0.5"/><circle cx="411.5" cy="39.3" r="2.9" fill="#e8e8e0" stroke="#111" stroke-width="1.3"/><path d="M410.2 38 l2.4 2.4" stroke="#111" stroke-width="1"/><line x1="413.8" y1="41.5" x2="417.6" y2="44.3" stroke="#111" stroke-width="1.6"/><circle cx="425" cy="39.3" r="2.9" fill="#f0f0ea" stroke="#a8a8a0" stroke-width="1.2"/><line x1="427.3" y1="41.5" x2="431" y2="44.3" stroke="#a8a8a0" stroke-width="1.5"/><rect x="437" y="33.2" width="12.3" height="14" fill="#f6f4ea" stroke="#d8d4c0" stroke-width="0.5"/><path d="M440 35.5 v9 M446.5 35.5 v9" stroke="#202050" stroke-width="1"/><path d="M438.6 37 h1.4 M438.6 40 h1.4 M438.6 43 h1.4 M446.5 36.5 h1.4 M446.5 39.5 h1.4 M446.5 42.5 h1.4" stroke="#202050" stroke-width="0.8"/><circle cx="442.3" cy="37.5" r="1.1" fill="#4040b0"/><circle cx="444.3" cy="42.5" r="1.1" fill="#4040b0"/><circle cx="443.3" cy="40" r="0.8" fill="#8080e0"/><rect x="452" y="33" width="0.8" height="13" fill="#c5c1ae"/><rect x="70.1" y="53.3" width="9.8" height="9.1" fill="#000"/><path d="M72 61 l3 -3 h2 l2 -3" stroke="#20a030" stroke-width="0.9" fill="none"/><circle cx="73" cy="60.3" r="1.3" fill="none" stroke="#fff" stroke-width="0.8"/><rect x="83.3" y="51.7" width="0.8" height="12" fill="#c5c1ae"/><rect x="84.1" y="51.7" width="0.8" height="12" fill="#fff"/><circle cx="322.2" cy="57.5" r="4.6" fill="#fff" stroke="#222" stroke-width="0.9"/><rect x="321.4" y="56.5" width="1.7" height="3.6" fill="#111"/><circle cx="322.25" cy="55" r="0.85" fill="#111"/><path d="M331.8 54.5 h5.5 v8 h-5.5 z" fill="#b8b8b0" stroke="#606058" stroke-width="0.7"/><rect x="333" y="53.3" width="3" height="1.8" fill="#707068"/><path d="M336.5 58 l3.5 2.3 l-3.5 2.3 z" fill="#303030"/><rect x="344.7" y="52.6" width="10.5" height="10.5" fill="#000"/><g fill="#e0e830"><circle cx="349.95" cy="55" r="1.6"/><circle cx="349.95" cy="60.7" r="1.6"/><circle cx="347.1" cy="57.85" r="1.6"/><circle cx="352.8" cy="57.85" r="1.6"/></g><rect x="358.3" y="52.6" width="10.5" height="10.5" fill="#8a8a98" stroke="#707080" stroke-width="0.5"/><path d="M359.5 61 l2 -1.5 v3z M367.6 61 l-2 -1.5 v3z" fill="#d8d8e8"/><rect x="361.5" y="60.5" width="4" height="1" fill="#d0d0e0"/><circle cx="363.5" cy="56.5" r="1.5" fill="#a8a8b8"/><rect x="373" y="51.7" width="0.8" height="12" fill="#c5c1ae"/><rect x="373.8" y="51.7" width="0.8" height="12" fill="#fff"/><path d="M377.2 56.5 l3 -3 v2 h1.2 v2 h-1.2 v2z" fill="#301828"/><path d="M380.5 58 q2.5 -1.5 4.5 0 v4.5 h-4.5z" fill="#702050"/><circle cx="383" cy="60" r="1.4" fill="#b03070"/><rect x="389.6" y="51.7" width="0.8" height="12" fill="#c5c1ae"/><rect x="390.4" y="51.7" width="0.8" height="12" fill="#fff"/><rect x="393" y="52.8" width="9.5" height="9.8" fill="#0a200a" stroke="#000" stroke-width="0.6"/><path d="M394.5 59.5 l2 -1 l1 -2.5 l3.5 -1.8" stroke="#30c040" stroke-width="0.8" fill="none"/><rect x="394" y="60.5" width="8" height="0.9" fill="#c8c8c0"/><rect x="66.8" y="68.5" width="10.2" height="10.2" fill="#000"/><path d="M67.5 72.8 h8.8 M71 68.8 v8.6 M67.8 70.2 l2.5 2.2 M72 74 l4 3" stroke="#406a40" stroke-width="1" fill="none"/><rect x="107.5" y="68.5" width="10.2" height="10.2" fill="#000"/><path d="M109 76.3 h2.5 v-2.5 h2.5 v-2.5 h2.5 v-1.5" stroke="#30a040" stroke-width="0.9" fill="none"/><rect x="153.6" y="68.5" width="10.4" height="10.2" fill="#000"/><path d="M155 70.3 v3.7 h3 v2.3 h4.8" stroke="#d0d040" stroke-width="1" fill="none"/><rect x="202.6" y="68.5" width="10.4" height="10.2" fill="#e8e830" stroke="#808000" stroke-width="0.6"/><circle cx="205" cy="75.5" r="0.9" fill="#303000"/><circle cx="207.5" cy="73.2" r="0.9" fill="#303000"/><circle cx="210.3" cy="71" r="0.9" fill="#303000"/><circle cx="205.5" cy="71" r="0.7" fill="#303000"/><circle cx="210" cy="75.5" r="0.7" fill="#303000"/><rect x="245.5" y="68.5" width="10.6" height="10.2" fill="#208a20"/><rect x="246.6" y="69.4" width="3.4" height="7.4" fill="#102010" stroke="#e8f0e8" stroke-width="0.7"/><rect x="251.3" y="69.4" width="3.4" height="7.4" fill="#30c030" stroke="#e8f0e8" stroke-width="0.7"/><rect x="279" y="68.5" width="10.6" height="10.2" fill="#000"/><path d="M281 69.5 v6.5 M281 73 h2.5 l2 -2 l2.5 2.5" stroke="#e0e0e0" stroke-width="0.9" fill="none"/><path d="M26.3 88.5 h7.5 l3.2 3.2 v12 h-10.7 z" fill="#f4ee3a" stroke="#111" stroke-width="1.2"/><path d="M33.8 88.5 v3.2 h3.2" fill="none" stroke="#111" stroke-width="0.8"/><path d="M28.5 95.8 h6 M28.5 98 h6 M28.5 100.2 h6" stroke="#6a6a10" stroke-width="0.8"/><path d="M40.2 94.5 v7 l4.3 -3.5 z" fill="#fff" stroke="#333" stroke-width="0.8"/><rect x="21.2" y="128.2" width="26.7" height="20.8" fill="#000"/><path d="M21.5 137.8 h5.5 l5 -8 h15.5" stroke="#c02020" stroke-width="0.9" fill="none"/><path d="M21.5 137 h5.8 l5 -7.8 h15.5" stroke="#30d030" stroke-width="1" fill="none"/><rect x="21.2" y="138.6" width="26.7" height="0.8" fill="#888"/><path d="M21.5 147 h26.5" stroke="#c02020" stroke-width="0.9" fill="none"/><path d="M21.5 145.8 h6 q2 0 3 -2 q1 -2 3 -2 h4 q2 0 3 2 q1 2 3 2 h6" stroke="#30d030" stroke-width="1" fill="none"/><rect x="20.8" y="169.3" width="27.2" height="20.8" fill="#000"/><path d="M21 178 h7 q2 -6 4 -6.5 h16" stroke="#30d030" stroke-width="1" fill="none"/><rect x="20.8" y="180.5" width="27.2" height="0.9" fill="#7a5a5a"/><path d="M21 186 h7.5 l1.5 -3.5 l1.5 6.5 l1.5 -3 h16" stroke="#30d030" stroke-width="1" fill="none"/><rect x="20.8" y="211.5" width="27.2" height="20.8" fill="#1c2c6c"/><path d="M21 231 q12 -8 27 -12" stroke="#b08890" stroke-width="1.1" fill="none"/><path d="M33.5 232.3 l10 -21" stroke="#c8c8c8" stroke-width="1" fill="none"/><rect x="21.2" y="252.7" width="26.9" height="21.4" fill="#000"/><path d="M24 268 q2 -3 4 -4 t4 -3 t4 -2.5 t4 -1.5 t4 -1.5 t3 -1" stroke="#901010" stroke-width="2.4" fill="none"/><path d="M22 273.5 q6 -12 26 -16.5" stroke="#40d030" stroke-width="1.2" fill="none"/><rect x="21.2" y="294.8" width="26.9" height="21.2" fill="#000"/><path d="M33 299.3 q6 -1.8 15 -1.8" stroke="#c01818" stroke-width="1.6" fill="none"/><path d="M22 297.6 h3 q1.5 0 1.8 4 q0.8 10 3.5 11.2 q2.5 1 3.5 -4 q0.8 -7.8 3.5 -8.3 h10.8" stroke="#98d038" stroke-width="1.5" fill="none"/><rect x="21" y="336.8" width="6.5" height="21" fill="#000"/><rect x="41.5" y="336.8" width="6.4" height="21" fill="#000"/><rect x="27.5" y="336.8" width="14" height="21" fill="#dcf6a8"/><g fill="#d85a20"><ellipse cx="35.5" cy="340.5" rx="1.8" ry="1.1"/><ellipse cx="32" cy="343.8" rx="1.4" ry="1.1"/><ellipse cx="30" cy="347.3" rx="1.1" ry="1.1"/><ellipse cx="34.5" cy="350" rx="3.5" ry="1.4"/><ellipse cx="31.5" cy="354.5" rx="1.4" ry="1"/><ellipse cx="38" cy="345" rx="0.9" ry="0.9"/></g><g fill="#80a040"><circle cx="30" cy="340" r="0.6"/><circle cx="38.5" cy="352" r="0.6"/><circle cx="29" cy="351" r="0.6"/></g></svg>
<div class="a" style="left:64px;top:509px;width:647px;height:1px;background:#c8c4b4"></div>
<div class="a" style="left:379px;top:511.5px;width:80.6px;height:9.5px;border-top:1px solid #b0ac98;border-left:1px solid #b0ac98;border-bottom:1px solid #fcfcf8;border-right:1px solid #fcfcf8"></div>
<div class="a" style="left:462px;top:511.5px;width:50.5px;height:9.5px;border-top:1px solid #b0ac98;border-left:1px solid #b0ac98;border-bottom:1px solid #fcfcf8;border-right:1px solid #fcfcf8"></div>
<div class="a" style="left:514.4px;top:511.5px;width:72.6px;height:9.5px;border-top:1px solid #b0ac98;border-left:1px solid #b0ac98;border-bottom:1px solid #fcfcf8;border-right:1px solid #fcfcf8"></div>
<div class="a" style="left:590.8px;top:511.5px;width:74.1px;height:9.5px;border-top:1px solid #b0ac98;border-left:1px solid #b0ac98;border-bottom:1px solid #fcfcf8;border-right:1px solid #fcfcf8"></div>
<div class="a" style="left:667.5px;top:511.5px;width:11.0px;height:9.5px;border-top:1px solid #b0ac98;border-left:1px solid #b0ac98;border-bottom:1px solid #fcfcf8;border-right:1px solid #fcfcf8"></div>
<div class="a" style="left:680.2px;top:511.5px;width:20.3px;height:9.5px;border-top:1px solid #b0ac98;border-left:1px solid #b0ac98;border-bottom:1px solid #fcfcf8;border-right:1px solid #fcfcf8"></div>
<svg class="a" style="left:699px;top:510px" width="12" height="11"><path d="M10 2 L2 10 M10 5 L5 10 M10 8 L8 10" stroke="#b8b4a0" stroke-width="1" stroke-dasharray="1 1"/></svg>
<div class="a" style="left:129.3px;top:51.8px;width:76.2px;height:11px;background:#fff;border-top:1px solid #7a7a70;border-left:1px solid #7a7a70;border-bottom:1px solid #f4f4f0;border-right:1px solid #f4f4f0;box-shadow:inset 1px 1px 0 #404040"></div>
<div class="a" style="left:196.5px;top:52.8px;width:8px;height:9px;background:#ECE9D8;border-right:1px solid #888;border-bottom:1px solid #888"></div>
<div class="a" style="left:199.0px;top:56.5px;width:0;height:0;border-left:2px solid transparent;border-right:2px solid transparent;border-top:2.5px solid #000"></div>
<div class="a" style="left:238.9px;top:51.8px;width:75.6px;height:11px;background:#fff;border-top:1px solid #7a7a70;border-left:1px solid #7a7a70;border-bottom:1px solid #f4f4f0;border-right:1px solid #f4f4f0;box-shadow:inset 1px 1px 0 #404040"></div>
<div class="a" style="left:305.5px;top:52.8px;width:8px;height:9px;background:#ECE9D8;border-right:1px solid #888;border-bottom:1px solid #888"></div>
<div class="a" style="left:308.0px;top:56.5px;width:0;height:0;border-left:2px solid transparent;border-right:2px solid transparent;border-top:2.5px solid #000"></div>
<div class="a" style="left:105.2px;top:67px;width:1px;height:13px;background:#a8a490"></div>
<div class="a" style="left:106.2px;top:67px;width:1px;height:13px;background:#fff"></div>
<div class="a" style="left:150.3px;top:67px;width:1px;height:13px;background:#a8a490"></div>
<div class="a" style="left:151.3px;top:67px;width:1px;height:13px;background:#fff"></div>
<div class="a" style="left:200.8px;top:67px;width:1px;height:13px;background:#a8a490"></div>
<div class="a" style="left:201.8px;top:67px;width:1px;height:13px;background:#fff"></div>
<div class="a" style="left:242.3px;top:67px;width:1px;height:13px;background:#a8a490"></div>
<div class="a" style="left:243.3px;top:67px;width:1px;height:13px;background:#fff"></div>
<div class="a" style="left:275.9px;top:67px;width:1px;height:13px;background:#a8a490"></div>
<div class="a" style="left:276.9px;top:67px;width:1px;height:13px;background:#fff"></div>
<div class="a" style="left:313.7px;top:67px;width:1px;height:13px;background:#a8a490"></div>
<div class="a" style="left:314.7px;top:67px;width:1px;height:13px;background:#fff"></div>
<div class="t" style="left:15.00px;top:7.21px;font-size:8.14px;line-height:8.14px;color:#fff;font-weight:bold;transform:scaleX(0.933);transform-origin:0 0;-webkit-text-stroke:0">Ecrin</div>
<div class="t" style="left:39.00px;top:7.21px;font-size:8.14px;line-height:8.14px;color:#fff;font-weight:bold;transform:scaleX(1.022);transform-origin:0 0;-webkit-text-stroke:0">v4.12.01</div>
<div class="t" style="left:80.70px;top:7.21px;font-size:8.14px;line-height:8.14px;color:#fff;font-weight:bold;transform:scaleX(0.967);transform-origin:0 0;-webkit-text-stroke:0">[Saphir NL : Untitled1]</div>
<div class="t" style="left:17.80px;top:20.97px;font-size:7.12px;line-height:7.12px;color:#000;font-weight:normal;transform:scaleX(0.800);transform-origin:0 0">File</div>
<div class="t" style="left:34.20px;top:20.97px;font-size:7.12px;line-height:7.12px;color:#000;font-weight:normal;transform:scaleX(0.782);transform-origin:0 0">Edit</div>
<div class="t" style="left:52.20px;top:20.97px;font-size:7.12px;line-height:7.12px;color:#000;font-weight:normal;transform:scaleX(0.894);transform-origin:0 0">Action</div>
<div class="t" style="left:77.00px;top:20.97px;font-size:7.12px;line-height:7.12px;color:#000;font-weight:normal;transform:scaleX(0.799);transform-origin:0 0">View</div>
<div class="t" style="left:97.30px;top:20.97px;font-size:7.12px;line-height:7.12px;color:#000;font-weight:normal;transform:scaleX(0.808);transform-origin:0 0">WEB</div>
<div class="t" style="left:117.60px;top:20.97px;font-size:7.12px;line-height:7.12px;color:#000;font-weight:normal;transform:scaleX(0.857);transform-origin:0 0">Window</div>
<div class="t" style="left:147.00px;top:20.97px;font-size:7.12px;line-height:7.12px;color:#000;font-weight:normal;transform:scaleX(0.859);transform-origin:0 0">Help</div>
<div class="t" style="left:23.00px;top:53.47px;font-size:7.12px;line-height:7.12px;color:#c0c0ff;font-weight:normal;transform:scaleX(0.846);transform-origin:0 0;-webkit-text-stroke:0">Settings</div>
<div class="t" style="left:14.70px;top:64.83px;font-size:7.41px;line-height:7.41px;color:#fff;font-weight:bold;transform:scaleX(0.939);transform-origin:0 0;-webkit-text-stroke:0">QAQC Data</div>
<div class="t" style="left:25.80px;top:475.03px;font-size:7.41px;line-height:7.41px;color:#d0d4ff;font-weight:normal;transform:scaleX(0.840);transform-origin:0 0;-webkit-text-stroke:0">Rates</div>
<div class="t" style="left:16.00px;top:487.43px;font-size:7.41px;line-height:7.41px;color:#d0d4ff;font-weight:normal;transform:scaleX(0.841);transform-origin:0 0;-webkit-text-stroke:0">Interpretation</div>
<div class="t" style="left:19.00px;top:499.33px;font-size:7.41px;line-height:7.41px;color:#d0d4ff;font-weight:normal;transform:scaleX(0.832);transform-origin:0 0;-webkit-text-stroke:0">More tools</div>
<div class="t" style="left:24.70px;top:511.43px;font-size:7.41px;line-height:7.41px;color:#d0d4ff;font-weight:normal;transform:scaleX(0.816);transform-origin:0 0;-webkit-text-stroke:0">Output</div>
<div class="t" style="left:88.80px;top:99.15px;font-size:7.27px;line-height:7.27px;color:#e8e8ff;font-weight:normal;transform:scaleX(0.923);transform-origin:0 0;-webkit-text-stroke:0">0.08</div>
<div class="t" style="left:88.00px;top:181.50px;font-size:7.27px;line-height:7.27px;color:#e8e8ff;font-weight:normal;transform:scaleX(0.980);transform-origin:0 0;-webkit-text-stroke:0">0.04</div>
<div class="t" style="left:97.90px;top:263.85px;font-size:7.27px;line-height:7.27px;color:#e8e8ff;font-weight:normal;transform:scaleX(0.975);transform-origin:0 0;-webkit-text-stroke:0">0</div>
<div class="t" style="left:88.00px;top:301.85px;font-size:7.27px;line-height:7.27px;color:#e8e8ff;font-weight:normal;transform:scaleX(0.857);transform-origin:0 0;-webkit-text-stroke:0">4950</div>
<div class="t" style="left:88.00px;top:367.15px;font-size:7.27px;line-height:7.27px;color:#e8e8ff;font-weight:normal;transform:scaleX(0.857);transform-origin:0 0;-webkit-text-stroke:0">4750</div>
<div class="t" style="left:88.00px;top:432.45px;font-size:7.27px;line-height:7.27px;color:#e8e8ff;font-weight:normal;transform:scaleX(0.857);transform-origin:0 0;-webkit-text-stroke:0">4550</div>
<div class="t" style="left:86.90px;top:483.30px;font-size:7.56px;line-height:7.56px;color:#000;font-weight:bold;transform:scaleX(0.926);transform-origin:0 0">Time</div>
<div class="t" style="left:131.00px;top:483.15px;font-size:7.27px;line-height:7.27px;color:#e8e8ff;font-weight:normal;transform:scaleX(0.909);transform-origin:0 0;-webkit-text-stroke:0">-17982.6</div>
<div class="t" style="left:216.35px;top:483.15px;font-size:7.27px;line-height:7.27px;color:#e8e8ff;font-weight:normal;transform:scaleX(0.909);transform-origin:0 0;-webkit-text-stroke:0">-17982.4</div>
<div class="t" style="left:301.70px;top:483.15px;font-size:7.27px;line-height:7.27px;color:#e8e8ff;font-weight:normal;transform:scaleX(0.909);transform-origin:0 0;-webkit-text-stroke:0">-17982.2</div>
<div class="t" style="left:389.65px;top:483.15px;font-size:7.27px;line-height:7.27px;color:#e8e8ff;font-weight:normal;transform:scaleX(0.923);transform-origin:0 0;-webkit-text-stroke:0">-17982</div>
<div class="t" style="left:472.40px;top:483.15px;font-size:7.27px;line-height:7.27px;color:#e8e8ff;font-weight:normal;transform:scaleX(0.909);transform-origin:0 0;-webkit-text-stroke:0">-17981.8</div>
<div class="t" style="left:557.75px;top:483.15px;font-size:7.27px;line-height:7.27px;color:#e8e8ff;font-weight:normal;transform:scaleX(0.909);transform-origin:0 0;-webkit-text-stroke:0">-17981.6</div>
<div class="t" style="left:643.10px;top:483.15px;font-size:7.27px;line-height:7.27px;color:#e8e8ff;font-weight:normal;transform:scaleX(0.909);transform-origin:0 0;-webkit-text-stroke:0">-17981.4</div>
<div class="t" style="left:66.30px;top:513.35px;font-size:7.27px;line-height:7.27px;color:#000;font-weight:normal;transform:scaleX(0.858);transform-origin:0 0">For Help, press F1</div>
<div class="t" style="left:381.70px;top:513.57px;font-size:7.12px;line-height:7.12px;color:#000;font-weight:normal;transform:scaleX(0.879);transform-origin:0 0">Downhole volume vs Time</div>
<div class="t" style="left:463.80px;top:513.57px;font-size:7.12px;line-height:7.12px;color:#000;font-weight:normal;transform:scaleX(0.898);transform-origin:0 0">X=-17981.9 hr</div>
<div class="t" style="left:515.80px;top:513.57px;font-size:7.12px;line-height:7.12px;color:#000;font-weight:normal;transform:scaleX(0.902);transform-origin:0 0">Y=0.0662403 Barrels</div>
<div class="t" style="left:595.90px;top:513.57px;font-size:7.12px;line-height:7.12px;color:#000;font-weight:normal;transform:scaleX(0.864);transform-origin:0 0">Ram=23MB - VM=17MB</div>
<div class="t" style="left:683.70px;top:513.57px;font-size:7.12px;line-height:7.12px;color:#000;font-weight:normal;transform:scaleX(0.879);transform-origin:0 0">NUM</div>
<div class="t" style="left:96.10px;top:55.47px;font-size:7.12px;line-height:7.12px;color:#000;font-weight:normal;transform:scaleX(0.891);transform-origin:0 0">Reference:</div>
<div class="t" style="left:216.80px;top:55.47px;font-size:7.12px;line-height:7.12px;color:#000;font-weight:normal;transform:scaleX(0.936);transform-origin:0 0">Active:</div>
<div class="t" style="left:131.70px;top:56.02px;font-size:6.83px;line-height:6.83px;color:#000;font-weight:normal;transform:scaleX(0.783);transform-origin:0 0">POPV</div>
<div class="t" style="left:241.30px;top:56.02px;font-size:6.83px;line-height:6.83px;color:#000;font-weight:normal;transform:scaleX(0.783);transform-origin:0 0">POPV</div>
<div class="t" style="left:83.80px;top:70.60px;font-size:7.56px;line-height:7.56px;color:#000;font-weight:bold;transform:scaleX(0.871);transform-origin:0 0">QAQC</div>
<div class="t" style="left:122.00px;top:70.60px;font-size:7.56px;line-height:7.56px;color:#000;font-weight:normal;transform:scaleX(0.794);transform-origin:0 0">Edit Data</div>
<div class="t" style="left:168.00px;top:70.60px;font-size:7.56px;line-height:7.56px;color:#000;font-weight:normal;transform:scaleX(0.836);transform-origin:0 0">Edit Rates</div>
<div class="t" style="left:217.00px;top:70.60px;font-size:7.56px;line-height:7.56px;color:#000;font-weight:normal;transform:scaleX(0.885);transform-origin:0 0">2D Map</div>
<div class="t" style="left:259.00px;top:70.60px;font-size:7.56px;line-height:7.56px;color:#000;font-weight:normal;transform:scaleX(0.894);transform-origin:0 0">FT 1</div>
<div class="t" style="left:293.70px;top:70.60px;font-size:7.56px;line-height:7.56px;color:#000;font-weight:normal;transform:scaleX(0.856);transform-origin:0 0">new...</div>
<div class="t" style="left:27.30px;top:111.07px;font-size:7.12px;line-height:7.12px;color:#0e1c7a;font-weight:normal;transform:scaleX(0.864);transform-origin:0 0">Load</div>
<div class="t" style="left:18.90px;top:153.17px;font-size:7.12px;line-height:7.12px;color:#0e1c7a;font-weight:normal;transform:scaleX(0.919);transform-origin:0 0">Difference</div>
<div class="t" style="left:19.90px;top:194.67px;font-size:7.12px;line-height:7.12px;color:#0e1c7a;font-weight:normal;transform:scaleX(0.897);transform-origin:0 0">Derivative</div>
<div class="t" style="left:21.60px;top:236.67px;font-size:7.12px;line-height:7.12px;color:#8aa0c8;font-weight:normal;transform:scaleX(0.879);transform-origin:0 0">Gradient</div>
<div class="t" style="left:27.20px;top:278.17px;font-size:7.12px;line-height:7.12px;color:#0e1c7a;font-weight:normal;transform:scaleX(0.843);transform-origin:0 0">Tides</div>
<div class="t" style="left:14.80px;top:319.97px;font-size:7.12px;line-height:7.12px;color:#0e1c7a;font-weight:normal;transform:scaleX(0.925);transform-origin:0 0">Correct trend</div>
<div class="t" style="left:13.90px;top:361.87px;font-size:7.12px;line-height:7.12px;color:#0e1c7a;font-weight:normal;transform:scaleX(0.896);transform-origin:0 0">Convert to BH</div>
</body></html>
